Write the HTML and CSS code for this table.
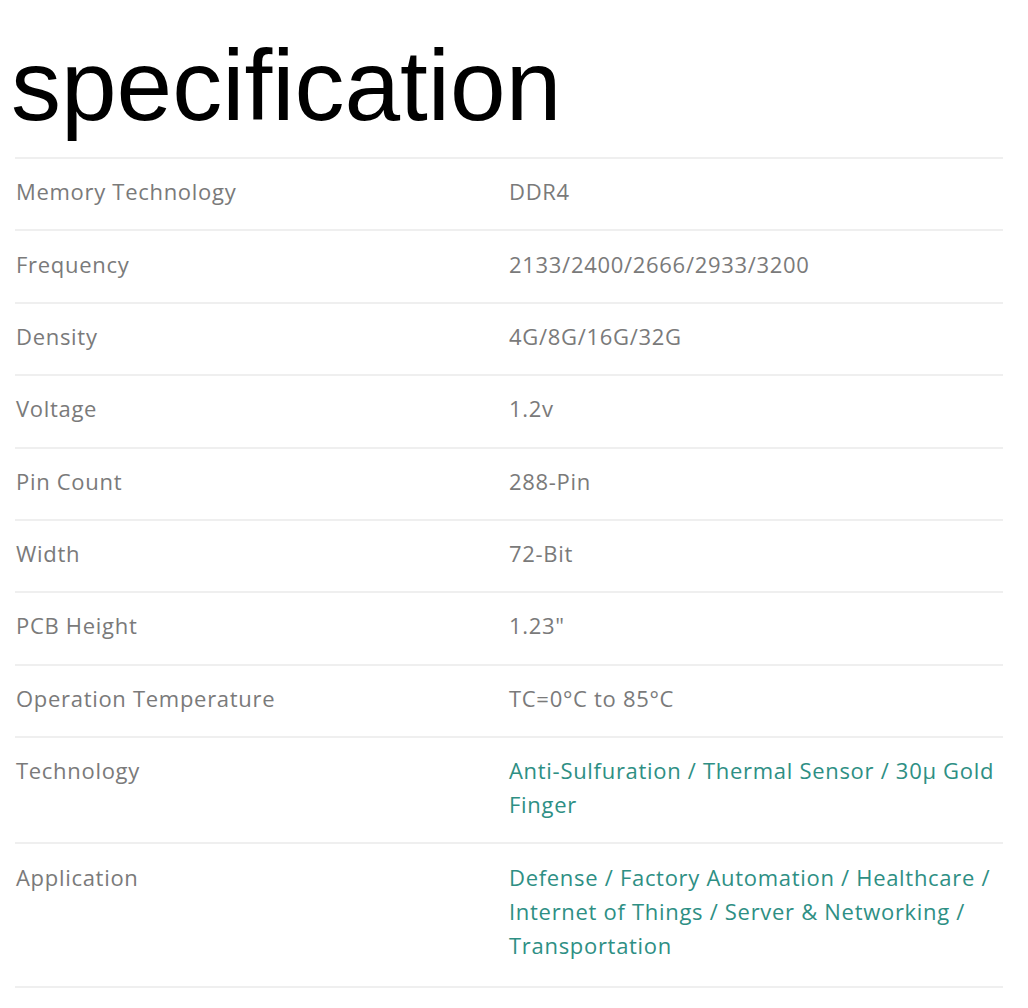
FILE: index.html
```html
<!DOCTYPE html>
<html>
<head>
<meta charset="utf-8">
<link rel="stylesheet" href="styles.css">
</head>
<body>
<div class="page">
  <h1 class="title">specification</h1>
  <div class="spec">
    <div class="row"><div class="label">Memory Technology</div><div class="value">DDR4</div></div>
    <div class="row"><div class="label">Frequency</div><div class="value">2133/2400/2666/2933/3200</div></div>
    <div class="row"><div class="label">Density</div><div class="value">4G/8G/16G/32G</div></div>
    <div class="row"><div class="label">Voltage</div><div class="value">1.2v</div></div>
    <div class="row"><div class="label">Pin Count</div><div class="value">288-Pin</div></div>
    <div class="row"><div class="label">Width</div><div class="value">72-Bit</div></div>
    <div class="row"><div class="label">PCB Height</div><div class="value">1.23"</div></div>
    <div class="row"><div class="label">Operation Temperature</div><div class="value">TC=0°C to 85°C</div></div>
    <div class="row"><div class="label">Technology</div><div class="value link">Anti-Sulfuration / Thermal Sensor / 30μ Gold Finger</div></div>
    <div class="row last"><div class="label">Application</div><div class="value link">Defense / Factory Automation / Healthcare / Internet of Things / Server &amp; Networking / Transportation</div></div>
  </div>
</div>
</body>
</html>
```

FILE: styles.css
```css
html, body {
  margin: 0;
  padding: 0;
  background: #ffffff;
}

.page {
  padding: 0 25px 0 15px;
}

.title {
  margin: 28px 0 14px -4px;
  font-family: "Liberation Sans", Arial, sans-serif;
  font-weight: normal;
  font-size: 100px;
  line-height: 115px;
  color: #000;
}

.spec {
  font-family: "Open Sans", sans-serif;
  font-size: 22px;
  letter-spacing: 0.7px;
  line-height: 34px;
  color: #7a7a7a;
}

.row {
  display: grid;
  grid-template-columns: 494px 1fr;
  border-top: 2px solid #efefef;
  padding: 15.2px 0 21.2px;
}

.row.last {
  border-bottom: 2px solid #efefef;
  padding-bottom: 24px;
}

.label {
  padding-left: 1px;
}

.value.link {
  color: #2e8f84;
}
```
